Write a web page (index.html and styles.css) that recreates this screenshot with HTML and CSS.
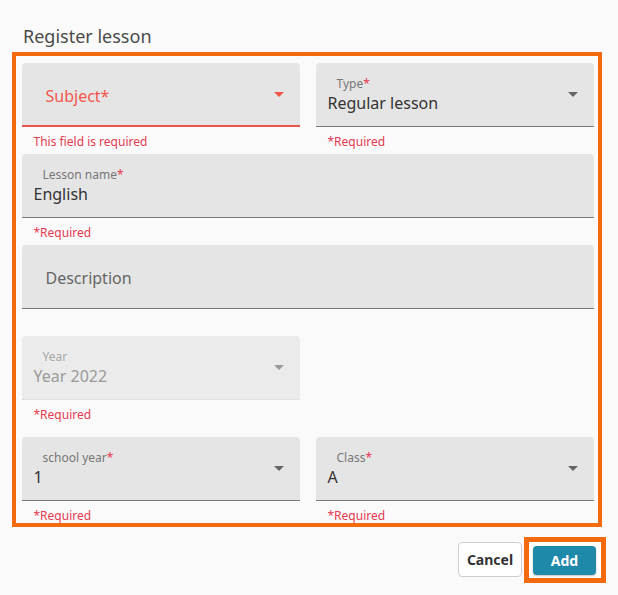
FILE: index.html
```html
<!DOCTYPE html>
<html>
<head>
<meta charset="utf-8">
<link rel="stylesheet" href="styles.css">
</head>
<body>
<div class="dialog">
  <h1 class="title">Register lesson</h1>
  <div class="frame">
    <div class="row two">
      <div class="cell">
        <div class="field error">
          <div class="placeholder err">Subject*</div>
          <span class="arrow red"></span>
        </div>
        <div class="helper">This field is required</div>
      </div>
      <div class="cell">
        <div class="field">
          <div class="label">Type<span class="ast">*</span></div>
          <div class="value">Regular lesson</div>
          <span class="arrow"></span>
        </div>
        <div class="helper">*Required</div>
      </div>
    </div>
    <div class="row">
      <div class="cell">
        <div class="field">
          <div class="label">Lesson name<span class="ast">*</span></div>
          <div class="value">English</div>
        </div>
        <div class="helper">*Required</div>
      </div>
    </div>
    <div class="row">
      <div class="cell">
        <div class="field">
          <div class="placeholder">Description</div>
        </div>
        <div class="helper empty"></div>
      </div>
    </div>
    <div class="row two">
      <div class="cell">
        <div class="field disabled">
          <div class="label">Year</div>
          <div class="value">Year 2022</div>
          <span class="arrow light"></span>
        </div>
        <div class="helper tall">*Required</div>
      </div>
    </div>
    <div class="row two">
      <div class="cell">
        <div class="field">
          <div class="label">school year<span class="ast">*</span></div>
          <div class="value">1</div>
          <span class="arrow"></span>
        </div>
        <div class="helper last">*Required</div>
      </div>
      <div class="cell">
        <div class="field">
          <div class="label">Class<span class="ast">*</span></div>
          <div class="value">A</div>
          <span class="arrow"></span>
        </div>
        <div class="helper last">*Required</div>
      </div>
    </div>
  </div>
  <div class="footer">
    <button class="btn cancel">Cancel</button>
    <div class="highlight">
      <button class="btn add">Add</button>
    </div>
  </div>
</div>
</body>
</html>
```
FILE: styles.css
```css
* { box-sizing: border-box; }
html, body {
  margin: 0;
  padding: 0;
  background: #fafafa;
}
body {
  font-family: "Noto Sans", "Open Sans", sans-serif;
  color: #333;
  width: 618px;
  height: 595px;
  overflow: hidden;
}
.dialog {
  display: flex;
  flex-direction: column;
}
.title {
  margin: 0;
  padding: 24px 0 0 23px;
  font-size: 18px;
  font-weight: 400;
  line-height: 24px;
  height: 52px;
  color: #4a4a4a;
}
.frame {
  margin-left: 12px;
  width: 590px;
  border: 4.5px solid #f66a0e;
  padding: 6.5px 4px 0 5.5px;
}
.row {
  display: grid;
  grid-template-columns: 1fr;
}
.row.two {
  grid-template-columns: 278px 278px;
  column-gap: 16px;
}
.field {
  position: relative;
  height: 64px;
  background: #e5e5e5;
  border-radius: 4px 4px 0 0;
  border-bottom: 1px solid #7a7a7a;
  padding: 13px 0 0 12px;
}
.field.error {
  border-bottom: 2px solid #e8534a;
}
.field.disabled {
  background: #ebebeb;
  border-bottom: 1px dotted #d6d6d6;
}
.label {
  margin-left: 9px;
  font-size: 12px;
  line-height: 16px;
  color: #777;
}
.ast { color: #e5394b; }
.value {
  font-size: 16px;
  line-height: 22px;
  color: #333;
}
.disabled .label { color: #a8a8a8; }
.disabled .value { color: #9a9a9a; }
.placeholder {
  padding: 9px 0 0 12px;
  font-size: 16px;
  line-height: 22px;
  color: #666;
}
.placeholder.err { color: #f2564b; }
.arrow {
  position: absolute;
  right: 16px;
  top: 29px;
  width: 0;
  height: 0;
  border-left: 5px solid transparent;
  border-right: 5px solid transparent;
  border-top: 5px solid #666;
}
.arrow.red { border-top-color: #f2564b; }
.arrow.light { border-top-color: #999; }
.helper {
  height: 27px;
  padding: 7px 0 0 12px;
  font-size: 12px;
  line-height: 16px;
  color: #e33a50;
}
.helper.tall { height: 37px; }
.helper.last { height: 22px; }
.footer {
  display: flex;
  justify-content: flex-end;
  align-items: center;
  gap: 2px;
  margin: 10px 12px 0 0;
}
.btn {
  font-family: "Noto Sans", "Open Sans", sans-serif;
  font-size: 14px;
  font-weight: 700;
  border-radius: 4px;
  cursor: pointer;
}
.cancel {
  width: 64px;
  height: 35px;
  background: #fff;
  border: 1px solid #cfcfcf;
  color: #333;
  padding: 0;
}
.highlight {
  border: 5px solid #f66a0e;
  padding: 4px 5px 3px 4px;
  background: #fff;
}
.add {
  display: block;
  width: 63px;
  height: 29px;
  border: none;
  background: #1f89a9;
  color: #fff;
  padding: 0;
  box-shadow: 0 1px 2px rgba(0,0,0,0.25);
}
```
